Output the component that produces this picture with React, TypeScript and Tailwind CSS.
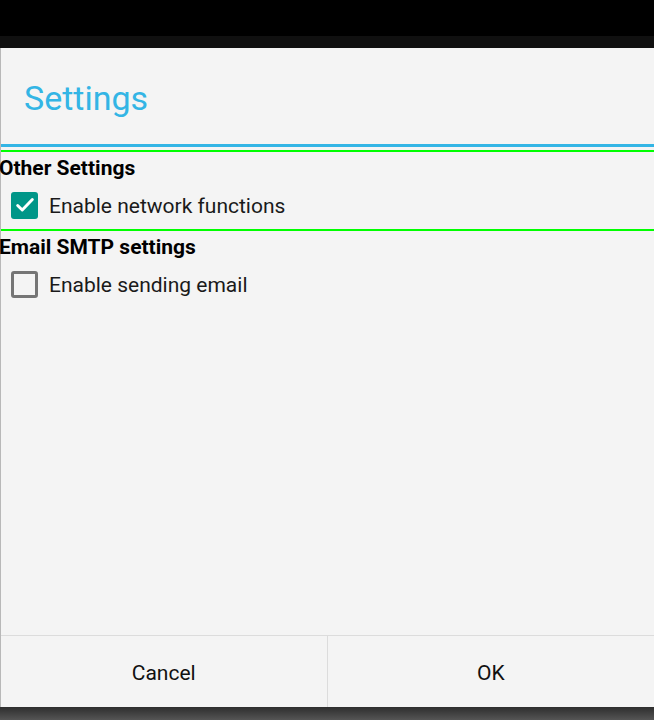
import { useState } from "react";

const CheckRow = ({ label, checked, onToggle }: { label: string; checked: boolean; onToggle: () => void }) => {
    return (
        <button onClick={onToggle} className="flex items-center h-[42px] pl-[10px] text-left">
            {checked ? (
                <span className="w-[27px] h-[27px] rounded-[3px] bg-[#009688] flex items-center justify-center">
                    <svg width="22" height="22" viewBox="0 0 24 24" fill="none">
                        <path d="M4 12.5l5 5L20 6" stroke="#fff" strokeWidth="3.2" strokeLinecap="round" strokeLinejoin="round" />
                    </svg>
                </span>
            ) : (
                <span className="w-[27px] h-[27px] rounded-[3px] border-[3px] border-[#757575]" />
            )}
            <span className="ml-[11px] mt-[4px] text-[21px] text-[#1a1a1a]">{label}</span>
        </button>
    );
};

const App = () => {
    const [network, setNetwork] = useState(true);
    const [email, setEmail] = useState(false);

    return (
        <div className="h-[720px] w-[654px] bg-black flex flex-col overflow-hidden font-['Roboto',sans-serif]">
            <div className="h-[36px] shrink-0" />
            <div className="h-[12px] shrink-0 bg-[#101010]" />
            <div className="h-[659px] shrink-0 bg-[#f4f4f4] border-l border-[#b8b8b8] flex flex-col">
                <div className="h-[96px] flex items-center pl-[23px]">
                    <h1 className="text-[34px] text-[#33b5e5] leading-none pt-[3px]">Settings</h1>
                </div>
                <div className="h-[3px] bg-[#33b5e5]" />
                <div className="h-[3px]" />
                <div className="h-[2px] bg-[#00ff00]" />
                <div className="flex flex-col">
                    <h2 className="text-[21px] font-bold text-black leading-[32px] -ml-[2px]">Other Settings</h2>
                    <CheckRow label="Enable network functions" checked={network} onToggle={() => setNetwork(!network)} />
                    <div className="h-[3px]" />
                    <div className="h-[2px] bg-[#00ff00]" />
                    <h2 className="text-[21px] font-bold text-black leading-[32px] -ml-[2px]">Email SMTP settings</h2>
                    <CheckRow label="Enable sending email" checked={email} onToggle={() => setEmail(!email)} />
                </div>
                <div className="grow" />
                <div className="h-[72px] border-t border-[#dcdcdc] grid grid-cols-2">
                    <button className="text-[21px] text-[#111] border-r border-[#dcdcdc] pt-[4px]">Cancel</button>
                    <button className="text-[21px] text-[#111] pt-[4px]">OK</button>
                </div>
            </div>
            <div className="grow bg-gradient-to-b from-[#2e2e2e] to-[#555]" />
        </div>
    );
};

export default App;
